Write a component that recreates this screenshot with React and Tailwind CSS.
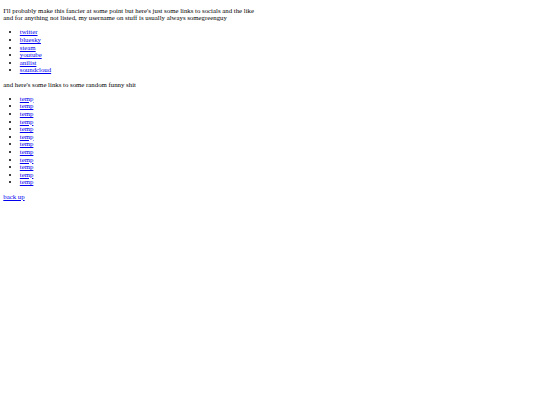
import React from "react";

const socials = ["twitter", "bluesky", "steam", "youtube", "anilist", "soundcloud"];
const temps = Array.from({ length: 12 }, () => "temp");

function Link({ children }) {
  return (
    <a href="#" className="text-[#0000ee] underline">
      {children}
    </a>
  );
}

export default function App() {
  return (
    <div
      className="min-h-[405px] bg-white text-black px-[3.3px] pt-[0.1px] pb-[3.3px] text-[6.8px] leading-[7.6px]"
      style={{ fontFamily: '"Liberation Serif", "Times New Roman", serif' }}
    >
      <p className="my-[6.6px]">
        I'll probably make this fancier at some point but here's just some links to socials and the like
        <br />
        and for anything not listed, my username on stuff is usually always somegreenguy
      </p>
      <ul className="my-[6.6px] pl-[16.5px] list-disc">
        {socials.map((s) => (
          <li key={s}>
            <Link>{s}</Link>
          </li>
        ))}
      </ul>
      <p className="my-[6.6px]">and here's some links to some random funny shit</p>
      <ul className="my-[6.6px] pl-[16.5px] list-disc">
        {temps.map((t, i) => (
          <li key={i}>
            <Link>{t}</Link>
          </li>
        ))}
      </ul>
      <p className="my-[6.6px]">
        <Link>back up</Link>
      </p>
    </div>
  );
}
